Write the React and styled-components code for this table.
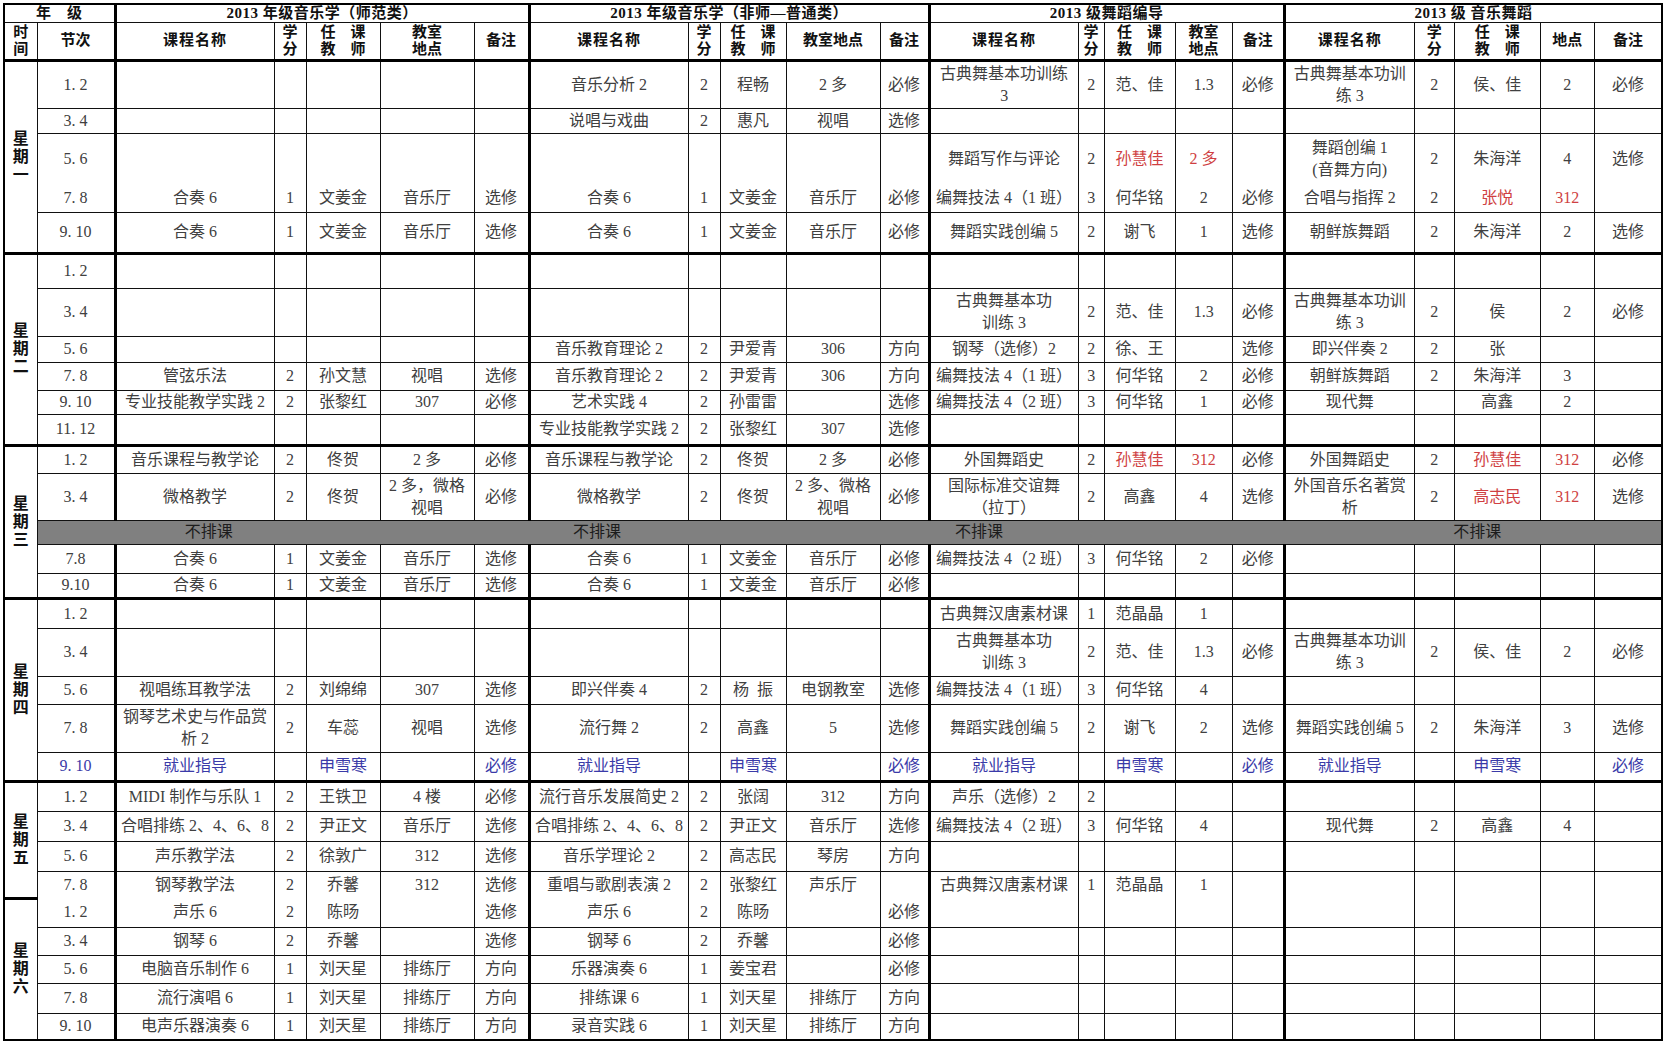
import React from 'react';
import styled, { createGlobalStyle, css } from 'styled-components';

// timetable for the 2013 cohort, four programmes side by side

const GlobalStyle = createGlobalStyle`
  html, body {
    margin: 0;
    padding: 0;
    background: #fff;
  }
  body {
    font-family: "Liberation Serif", "Noto Sans CJK SC", serif;
  }
`;

const tones = {
  red: '#cf3f42',
  blue: '#3a3aa8',
};

const Page = styled.div`
  width: 1664px;
  height: 1042px;
  padding: 3px 0 0 3px;
  box-sizing: border-box;
  overflow: hidden;
`;

const Table = styled.table`
  border-collapse: collapse;
  table-layout: fixed;
  width: 1658px;
  border: 2px solid #000;
`;

const Col = styled.col`
  width: ${p => p.$w}px;
`;

const Head = styled.th`
  border: 1px solid #111;
  padding: 0;
  text-align: center;
  vertical-align: middle;
  white-space: pre-line;
  color: #111;
  font-weight: 700;
  font-size: 15px;
  line-height: ${p => (p.$title ? 16 : 17)}px;
  letter-spacing: ${p => (p.$spaced ? '1px' : p.$title ? '0.5px' : '0')};
  ${p => p.$thick && css`border-right: 3px solid #000;`}
`;

const Cell = styled.td`
  border: 1px solid #111;
  padding: 0 1px;
  text-align: center;
  vertical-align: middle;
  white-space: pre-line;
  overflow: hidden;
  font-size: 16px;
  line-height: 22px;
  color: ${p => tones[p.$tone] || '#404040'};
  ${p => p.$thick && css`border-right: 3px solid #000;`}
`;

const DayCell = styled.td`
  border: 1px solid #111;
  border-top: 3px solid #000;
  padding: 0;
  text-align: center;
  vertical-align: middle;
  white-space: pre-line;
  font-size: 16px;
  line-height: 18px;
  font-weight: 700;
  color: #111;
`;

const GrayCell = styled.td`
  background: #808080;
  border: 1px solid #111;
  padding: 0;
  text-align: center;
  vertical-align: middle;
  font-size: 16px;
  line-height: 22px;
  color: #1c1c1c;
  & + & {
    border-left-style: hidden;
  }
`;

const Row = styled.tr`
  height: ${p => p.$h}px;
  ${p => p.$dayStart && css`& > ${Cell} { border-top: 3px solid #000; }`}
  ${p => p.$joined && css`& > ${Cell} { border-top-style: hidden; }`}
`;

const widths = [33, 78, 159, 32, 74, 94, 55, 159, 32, 66, 94, 49, 149, 26, 71, 57, 52, 130, 40, 86, 54, 68];

const groupTitles = [
  '2013 年级音乐学（师范类）',
  '2013 年级音乐学（非师—普通类）',
  '2013 级舞蹈编导',
  '2013 级 音乐舞蹈',
];

const groupHeads = [
  ['课程名称', '学\n分', '任　课\n教　师', '教室\n地点', '备注'],
  ['课程名称', '学\n分', '任　课\n教　师', '教室地点', '备注'],
  ['课程名称', '学\n分', '任　课\n教　师', '教室\n地点', '备注'],
  ['课程名称', '学\n分', '任　课\n教　师', '地点', '备注'],
];

const E = '||||';
const JOB = '就业指导||申雪寒||必修';

// each group: name|credit|teacher|room|note, "!" marks red text
const days = [
  {
    label: '星\n期\n一',
    rows: [
      { p: '1. 2', h: 48, g: [E, '音乐分析 2|2|程畅|2 多|必修', '古典舞基本功训练\n3|2|范、佳|1.3|必修', '古典舞基本功训\n练 3|2|侯、佳|2|必修'] },
      { p: '3. 4', h: 25, g: [E, '说唱与戏曲|2|惠凡|视唱|选修', E, E] },
      { p: '5. 6', h: 52, g: [E, E, '舞蹈写作与评论|2|!孙慧佳|!2 多|', '舞蹈创编 1\n(音舞方向)|2|朱海洋|4|选修'] },
      { p: '7. 8', h: 27, joined: true, g: ['合奏 6|1|文姜金|音乐厅|选修', '合奏 6|1|文姜金|音乐厅|必修', '编舞技法 4（1 班）|3|何华铭|2|必修', '合唱与指挥 2|2|!张悦|!312|'] },
      { p: '9. 10', h: 41, g: ['合奏 6|1|文姜金|音乐厅|选修', '合奏 6|1|文姜金|音乐厅|必修', '舞蹈实践创编 5|2|谢飞|1|选修', '朝鲜族舞蹈|2|朱海洋|2|选修'] },
    ],
  },
  {
    label: '星\n期\n二',
    rows: [
      { p: '1. 2', h: 35, g: [E, E, E, E] },
      { p: '3. 4', h: 48, g: [E, E, '古典舞基本功\n训练 3|2|范、佳|1.3|必修', '古典舞基本功训\n练 3|2|侯|2|必修'] },
      { p: '5. 6', h: 26, g: [E, '音乐教育理论 2|2|尹爱青|306|方向', '钢琴（选修）2|2|徐、王||选修', '即兴伴奏 2|2|张||'] },
      { p: '7. 8', h: 28, g: ['管弦乐法|2|孙文慧|视唱|选修', '音乐教育理论 2|2|尹爱青|306|方向', '编舞技法 4（1 班）|3|何华铭|2|必修', '朝鲜族舞蹈|2|朱海洋|3|'] },
      { p: '9. 10', h: 24, g: ['专业技能教学实践 2|2|张黎红|307|必修', '艺术实践 4|2|孙雷雷||选修', '编舞技法 4（2 班）|3|何华铭|1|必修', '现代舞||高鑫|2|'] },
      { p: '11. 12', h: 31, g: [E, '专业技能教学实践 2|2|张黎红|307|选修', E, E] },
    ],
  },
  {
    label: '星\n期\n三',
    rows: [
      { p: '1. 2', h: 28, g: ['音乐课程与教学论|2|佟贺|2 多|必修', '音乐课程与教学论|2|佟贺|2 多|必修', '外国舞蹈史|2|!孙慧佳|!312|必修', '外国舞蹈史|2|!孙慧佳|!312|必修'] },
      { p: '3. 4', h: 47, g: ['微格教学|2|佟贺|2 多，微格\n视唱|必修', '微格教学|2|佟贺|2 多、微格\n视唱|必修', '国际标准交谊舞\n（拉丁）|2|高鑫|4|选修', '外国音乐名著赏\n析|2|!高志民|!312|选修'] },
      { gray: true, h: 24 },
      { p: '7.8', h: 29, g: ['合奏 6|1|文姜金|音乐厅|选修', '合奏 6|1|文姜金|音乐厅|必修', '编舞技法 4（2 班）|3|何华铭|2|必修', E] },
      { p: '9.10', h: 25, g: ['合奏 6|1|文姜金|音乐厅|选修', '合奏 6|1|文姜金|音乐厅|必修', E, E] },
    ],
  },
  {
    label: '星\n期\n四',
    rows: [
      { p: '1. 2', h: 30, g: [E, E, '古典舞汉唐素材课|1|范晶晶|1|', E] },
      { p: '3. 4', h: 48, g: [E, E, '古典舞基本功\n训练 3|2|范、佳|1.3|必修', '古典舞基本功训\n练 3|2|侯、佳|2|必修'] },
      { p: '5. 6', h: 28, g: ['视唱练耳教学法|2|刘绵绵|307|选修', '即兴伴奏 4|2|杨\u2002振|电钢教室|选修', '编舞技法 4（1 班）|3|何华铭|4|', E] },
      { p: '7. 8', h: 48, g: ['钢琴艺术史与作品赏\n析 2|2|车蕊|视唱|选修', '流行舞 2|2|高鑫|5|选修', '舞蹈实践创编 5|2|谢飞|2|选修', '舞蹈实践创编 5|2|朱海洋|3|选修'] },
      { p: '9. 10', h: 29, tone: 'blue', g: [JOB, JOB, JOB, JOB] },
    ],
  },
  {
    label: '星\n期\n五',
    rows: [
      { p: '1. 2', h: 30, g: ['MIDI 制作与乐队 1|2|王铁卫|4 楼|必修', '流行音乐发展简史 2|2|张阔|312|方向', '声乐（选修）2|2|||', E] },
      { p: '3. 4', h: 30, g: ['合唱排练 2、4、6、8|2|尹正文|音乐厅|选修', '合唱排练 2、4、6、8|2|尹正文|音乐厅|选修', '编舞技法 4（2 班）|3|何华铭|4|', '现代舞|2|高鑫|4|'] },
      { p: '5. 6', h: 30, g: ['声乐教学法|2|徐敦广|312|选修', '音乐学理论 2|2|高志民|琴房|方向', E, E] },
      { p: '7. 8', h: 27, g: ['钢琴教学法|2|乔馨|312|选修', '重唱与歌剧表演 2|2|张黎红|声乐厅|', '古典舞汉唐素材课|1|范晶晶|1|', E] },
    ],
  },
  {
    label: '星\n期\n六',
    joinFirst: true,
    rows: [
      { p: '1. 2', h: 29, g: ['声乐 6|2|陈旸||选修', '声乐 6|2|陈旸||必修', E, E] },
      { p: '3. 4', h: 28, g: ['钢琴 6|2|乔馨||选修', '钢琴 6|2|乔馨||必修', E, E] },
      { p: '5. 6', h: 28, g: ['电脑音乐制作 6|1|刘天星|排练厅|方向', '乐器演奏 6|1|姜宝君||必修', E, E] },
      { p: '7. 8', h: 30, g: ['流行演唱 6|1|刘天星|排练厅|方向', '排练课 6|1|刘天星|排练厅|方向', E, E] },
      { p: '9. 10', h: 27, g: ['电声乐器演奏 6|1|刘天星|排练厅|方向', '录音实践 6|1|刘天星|排练厅|方向', E, E] },
    ],
  },
];

// the grey "不排课" band: [colspan, text]
const grayBand = [[4, '不排课'], [1, ''], [3, '不排课'], [2, ''], [2, '不排课'], [5, ''], [2, '不排课'], [2, '']];

const GroupCells = ({ text, tone, last }) =>
  text.split('|').map((raw, i) => {
    const red = raw.startsWith('!');
    return (
      <Cell key={i} $tone={red ? 'red' : tone} $thick={i === 4 && !last}>
        {red ? raw.slice(1) : raw}
      </Cell>
    );
  });

const App = () => {
  return (
    <Page>
      <GlobalStyle />
      <Table>
        <colgroup>
          {widths.map((w, i) => <Col key={i} $w={w} />)}
        </colgroup>
        <thead>
          <Row $h={18}>
            <Head colSpan={2} $title $thick>年　级</Head>
            {groupTitles.map((t, i) => (
              <Head key={t} colSpan={5} $title $thick={i < 3}>{t}</Head>
            ))}
          </Row>
          <Row $h={38}>
            <Head>{'时\n间'}</Head>
            <Head $thick>节次</Head>
            {groupHeads.map((heads, gi) =>
              heads.map((h, i) => (
                <Head key={`${gi}-${i}`} $spaced={i === 0} $thick={i === 4 && gi < 3}>{h}</Head>
              ))
            )}
          </Row>
        </thead>
        <tbody>
          {days.map(day =>
            day.rows.map((row, i) => {
              const key = `${day.label}-${i}`;
              if (row.gray) {
                return (
                  <Row key={key} $h={row.h}>
                    {grayBand.map(([span, t], j) => (
                      <GrayCell key={j} colSpan={span}>{t}</GrayCell>
                    ))}
                  </Row>
                );
              }
              const dayStart = i === 0 && !day.joinFirst;
              const joined = row.joined || (i === 0 && day.joinFirst);
              return (
                <Row key={key} $h={row.h} $dayStart={dayStart} $joined={joined}>
                  {i === 0 && <DayCell rowSpan={day.rows.length}>{day.label}</DayCell>}
                  <Cell $tone={row.tone} $thick>{row.p}</Cell>
                  {row.g.map((text, gi) => (
                    <GroupCells key={gi} text={text} tone={row.tone} last={gi === 3} />
                  ))}
                </Row>
              );
            })
          )}
        </tbody>
      </Table>
    </Page>
  );
};

export default App;
